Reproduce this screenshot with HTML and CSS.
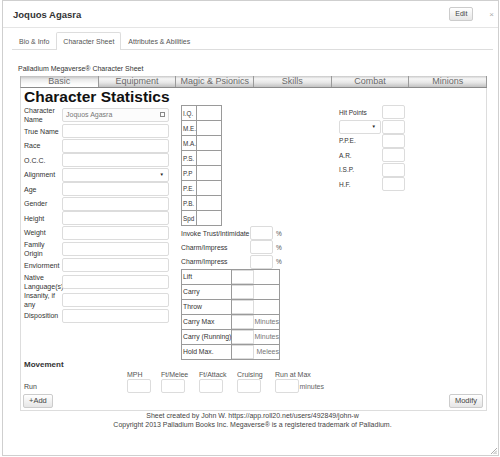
FILE: index.html
```html
<!DOCTYPE html>
<html>
<head>
<meta charset="utf-8">
<title>Joquos Agasra</title>
<link rel="stylesheet" href="styles.css">
</head>
<body>
<div class="dialog">
  <div class="dlg-head">
    <div class="dlg-title">Joquos Agasra</div>
    <button class="btn btn-edit">Edit</button>
    <span class="close">×</span>
  </div>
  <div class="tabs">
    <div class="tab">Bio &amp; Info</div>
    <div class="tab active">Character Sheet</div>
    <div class="tab">Attributes &amp; Abilities</div>
  </div>
  <div class="wrap">
    <div class="subtitle">Palladium Megaverse® Character Sheet</div>
    <div class="sheet">
      <div class="stabs">
        <div class="stab active">Basic</div>
        <div class="stab">Equipment</div>
        <div class="stab">Magic &amp; Psionics</div>
        <div class="stab">Skills</div>
        <div class="stab">Combat</div>
        <div class="stab last">Minions</div>
      </div>
      <div class="sbody">
        <h1 class="heading">Character Statistics</h1>
        <div class="cols">
          <div class="col-left">
            <div class="frow r19"><span class="flabel">Character Name</span><div class="inp wide named"><span>Joquos Agasra</span><span class="ico"></span></div></div>
            <div class="frow r14"><span class="flabel">True Name</span><div class="inp wide"></div></div>
            <div class="frow r14"><span class="flabel">Race</span><div class="inp wide"></div></div>
            <div class="frow r14"><span class="flabel">O.C.C.</span><div class="inp wide"></div></div>
            <div class="frow r14"><span class="flabel">Alignment</span><div class="inp wide sel"><span class="arrow">▼</span></div></div>
            <div class="frow r14"><span class="flabel">Age</span><div class="inp wide"></div></div>
            <div class="frow r14"><span class="flabel">Gender</span><div class="inp wide"></div></div>
            <div class="frow r14"><span class="flabel">Height</span><div class="inp wide"></div></div>
            <div class="frow r14"><span class="flabel">Weight</span><div class="inp wide"></div></div>
            <div class="frow r18"><span class="flabel">Family Origin</span><div class="inp wide"></div></div>
            <div class="frow r14"><span class="flabel">Enviorment</span><div class="inp wide"></div></div>
            <div class="frow r18"><span class="flabel">Native Language(s)</span><div class="inp wide"></div></div>
            <div class="frow r18"><span class="flabel">Insanity, if any</span><div class="inp wide"></div></div>
            <div class="frow r14"><span class="flabel">Disposition</span><div class="inp wide"></div></div>
          </div>
          <div class="col-mid">
            <table class="attr">
              <tr><td class="al">I.Q.</td><td></td></tr>
              <tr><td class="al">M.E.</td><td></td></tr>
              <tr><td class="al">M.A.</td><td></td></tr>
              <tr><td class="al">P.S.</td><td></td></tr>
              <tr><td class="al">P.P</td><td></td></tr>
              <tr><td class="al">P.E.</td><td></td></tr>
              <tr><td class="al">P.B.</td><td></td></tr>
              <tr><td class="al">Spd</td><td></td></tr>
            </table>
            <div class="prow"><span class="plabel">Invoke Trust/Intimidate</span><div class="inp small"></div><span class="pct">%</span></div>
            <div class="prow"><span class="plabel">Charm/Impress</span><div class="inp small"></div><span class="pct">%</span></div>
            <div class="prow"><span class="plabel">Charm/Impress</span><div class="inp small"></div><span class="pct">%</span></div>
            <table class="lift">
              <tr><td class="ll">Lift</td><td class="lv"><div class="cellinp"></div></td><td class="lu"></td></tr>
              <tr><td class="ll">Carry</td><td class="lv"><div class="cellinp"></div></td><td class="lu"></td></tr>
              <tr><td class="ll">Throw</td><td class="lv"><div class="cellinp"></div></td><td class="lu"></td></tr>
              <tr><td class="ll">Carry Max</td><td class="lv"><div class="cellinp"></div></td><td class="lu">Minutes</td></tr>
              <tr><td class="ll">Carry (Running)</td><td class="lv"><div class="cellinp"></div></td><td class="lu">Minutes</td></tr>
              <tr><td class="ll">Hold Max.</td><td class="lv"><div class="cellinp"></div></td><td class="lu">Melees</td></tr>
            </table>
          </div>
          <div class="col-right">
            <div class="rrow"><span class="rlabel">Hit Points</span><div class="inp tiny"></div></div>
            <div class="rrow"><div class="inp rsel"><span class="arrow">▼</span></div><div class="inp tiny"></div></div>
            <div class="rrow"><span class="rlabel">P.P.E.</span><div class="inp tiny"></div></div>
            <div class="rrow"><span class="rlabel">A.R.</span><div class="inp tiny"></div></div>
            <div class="rrow"><span class="rlabel">I.S.P.</span><div class="inp tiny"></div></div>
            <div class="rrow"><span class="rlabel">H.F.</span><div class="inp tiny"></div></div>
          </div>
        </div>
        <div class="move">
          <div class="move-title">Movement</div>
          <div class="mgrid mhead">
            <span></span><span>MPH</span><span>Ft/Melee</span><span>Ft/Attack</span><span>Cruising</span><span>Run at Max</span>
          </div>
          <div class="mgrid mrow">
            <span class="mlabel">Run</span>
            <span><div class="inp minp"></div></span>
            <span><div class="inp minp"></div></span>
            <span><div class="inp minp"></div></span>
            <span><div class="inp minp"></div></span>
            <span class="mlast"><div class="inp minp"></div><span class="mins">minutes</span></span>
          </div>
        </div>
        <div class="btnrow">
          <button class="btn btn-add">+Add</button>
          <button class="btn btn-mod">Modify</button>
        </div>
      </div>
    </div>
    <div class="footer">
      <div>Sheet created by John W. https://app.roll20.net/users/492849/john-w</div>
      <div>Copyright 2013 Palladium Books Inc. Megaverse® is a registered trademark of Palladium.</div>
    </div>
  </div>
  <svg class="grip" width="7" height="7" viewBox="0 0 7 7">
    <line x1="1" y1="7" x2="7" y2="1" stroke="#999" stroke-width="0.8"/>
    <line x1="3.5" y1="7" x2="7" y2="3.5" stroke="#999" stroke-width="0.8"/>
    <line x1="5.5" y1="7" x2="7" y2="5.5" stroke="#999" stroke-width="0.8"/>
  </svg>
</div>
</body>
</html>
```
FILE: styles.css
```css
* { box-sizing: border-box; }
body {
  margin: 0;
  padding: 0 0 0 2px;
  background: #fff;
  font-family: "Liberation Sans", Arial, sans-serif;
  color: #333;
}
.dialog {
  position: relative;
  width: 497px;
  height: 456px;
  border: 1px solid #cfcfcf;
  background: #fff;
}
.dlg-head {
  display: flex;
  align-items: center;
  height: 27px;
  padding-left: 10px;
  border-bottom: 1px solid #e5e5e5;
}
.dlg-title {
  font-size: 9.5px;
  font-weight: bold;
  color: #333;
}
.btn {
  font-family: "Liberation Sans", Arial, sans-serif;
  font-size: 7.5px;
  color: #444;
  height: 14.5px;
  padding: 0 5px;
  border: 1px solid #ccc;
  border-radius: 2px;
  background: linear-gradient(to bottom, #ffffff, #e6e6e6);
  line-height: 12px;
}
.btn-edit {
  margin-left: auto;
  font-size: 7px;
  padding: 0 5px;
}
.close {
  margin-left: 16px;
  margin-right: 4px;
  font-size: 8px;
  color: #aaa;
}
.tabs {
  display: flex;
  height: 18px;
  margin: 4px 5px 0 9px;
  border-bottom: 1px solid #ddd;
}
.tab {
  height: 18px;
  padding: 0 6px;
  border: 1px solid transparent;
  border-bottom: 0;
  line-height: 17px;
  font-size: 7px;
  color: #555;
}
.tab.active {
  background: #fff;
  border-color: #ddd;
  border-radius: 2px 2px 0 0;
}
.wrap {
  margin-left: 15px;
  width: 469px;
}
.subtitle {
  margin-top: 14px;
  font-size: 7px;
  line-height: 9px;
  color: #333;
}
.sheet {
  margin: 3px 0 0 2px;
  width: 467px;
}
.stabs {
  display: flex;
  height: 12px;
  border-left: 1px solid #b5b5b5;
  border-bottom: 1px solid #8a8a8a;
}
.stab {
  flex: 1;
  font-size: 9px;
  line-height: 11px;
  text-align: center;
  color: #6a6a6a;
  border-right: 1px solid #9a9a9a;
  background: linear-gradient(to bottom, #c8c8c8 0%, #f6f6f6 25%, #e6e6e6 60%, #c2c2c2 100%);
}
.stab.active {
  background: linear-gradient(to bottom, #bdbdbd 0%, #e9e9e9 30%, #fbfbfb 70%, #ffffff 100%);
}
.sbody {
  border: 1px solid #ddd;
  border-top: 0;
  padding: 0 3px 2px 3px;
}
.heading {
  margin: 0 0 -1px 0;
  font-size: 15.5px;
  line-height: 18px;
  font-weight: bold;
  color: #111;
}
.cols {
  display: flex;
  align-items: flex-start;
}
.col-left { width: 146px; }
.frow {
  display: flex;
  align-items: center;
}
.r14 { height: 14.5px; }
.r18 { height: 18px; }
.r19 { height: 19px; }
.flabel {
  width: 38px;
  flex: none;
  font-size: 7px;
  line-height: 9px;
  color: #333;
}
.inp {
  height: 14px;
  border: 1px solid #dcdcdc;
  border-radius: 2px;
  background: #fff;
  flex: none;
}
.wide { width: 107px; }
.named {
  display: flex;
  align-items: center;
  justify-content: space-between;
  padding: 0 2px 0 3px;
  font-size: 7px;
  color: #777;
  background: #fcfcfc;
}
.ico {
  width: 5px;
  height: 5px;
  border: 1px solid #888;
  margin-right: 1px;
}
.sel {
  display: flex;
  align-items: center;
  justify-content: flex-end;
  padding-right: 4px;
}
.arrow {
  font-size: 4.5px;
  color: #222;
}
.col-mid {
  width: 99px;
  margin-left: 11px;
}
.attr {
  border-collapse: collapse;
  width: 41px;
}
.attr td {
  border: 1px solid #9a9a9a;
  height: 15px;
  padding: 0 0 0 1px;
  font-size: 6.3px;
  color: #333;
}
.attr td.al { width: 15px; }
.prow {
  display: flex;
  align-items: center;
  height: 14.3px;
}
.plabel {
  width: 69px;
  flex: none;
  white-space: nowrap;
  font-size: 6.8px;
  color: #333;
}
.small { width: 23px; position: relative; }
.pct {
  margin-left: 3px;
  font-size: 6.5px;
  color: #555;
}
.lift {
  border-collapse: collapse;
  width: 99px;
  margin-top: 0;
}
.lift td {
  height: 14.8px;
  padding: 0;
  font-size: 6.8px;
  color: #333;
  border-top: 1px solid #9a9a9a;
  border-bottom: 1px solid #9a9a9a;
}
.lift td.ll {
  width: 50px;
  padding-left: 1px;
  border-left: 1px solid #9a9a9a;
  border-right: 1px solid #9a9a9a;
  white-space: nowrap;
}
.lift td.lv { width: 23px; }
.lift td.lu {
  text-align: right;
  border-right: 1px solid #9a9a9a;
  color: #777;
  font-size: 7px;
}
.cellinp {
  height: 14px;
  border: 1px solid #dcdcdc;
  border-left: 0;
}
.col-right {
  width: 66px;
  margin-left: 59px;
}
.rrow {
  display: flex;
  align-items: center;
  height: 14.4px;
}
.rlabel {
  width: 43px;
  flex: none;
  font-size: 6.5px;
  color: #333;
}
.rsel {
  width: 42px;
  margin-right: 1px;
  display: flex;
  align-items: center;
  justify-content: flex-end;
  padding-right: 4px;
}
.tiny { width: 22.5px; }
.move-title {
  font-size: 8px;
  font-weight: bold;
  line-height: 10px;
  color: #333;
}
.mgrid {
  display: grid;
  grid-template-columns: 103px 34px 38px 38px 38px auto;
  align-items: center;
}
.mhead {
  height: 9px;
  font-size: 7px;
  line-height: 9px;
  color: #555;
}
.mrow { height: 15px; }
.mlabel {
  font-size: 7px;
  color: #444;
}
.minp { width: 23.5px; }
.mlast {
  display: flex;
  align-items: center;
}
.mins {
  margin-left: 1px;
  font-size: 7px;
  color: #666;
}
.btnrow {
  display: flex;
  justify-content: space-between;
  margin-left: -1px;
}
.btn-add, .btn-mod { height: 14px; }
.footer {
  text-align: center;
  font-size: 7px;
  line-height: 9px;
  color: #444;
}
.grip {
  position: absolute;
  right: 1px;
  bottom: 1px;
}
```
